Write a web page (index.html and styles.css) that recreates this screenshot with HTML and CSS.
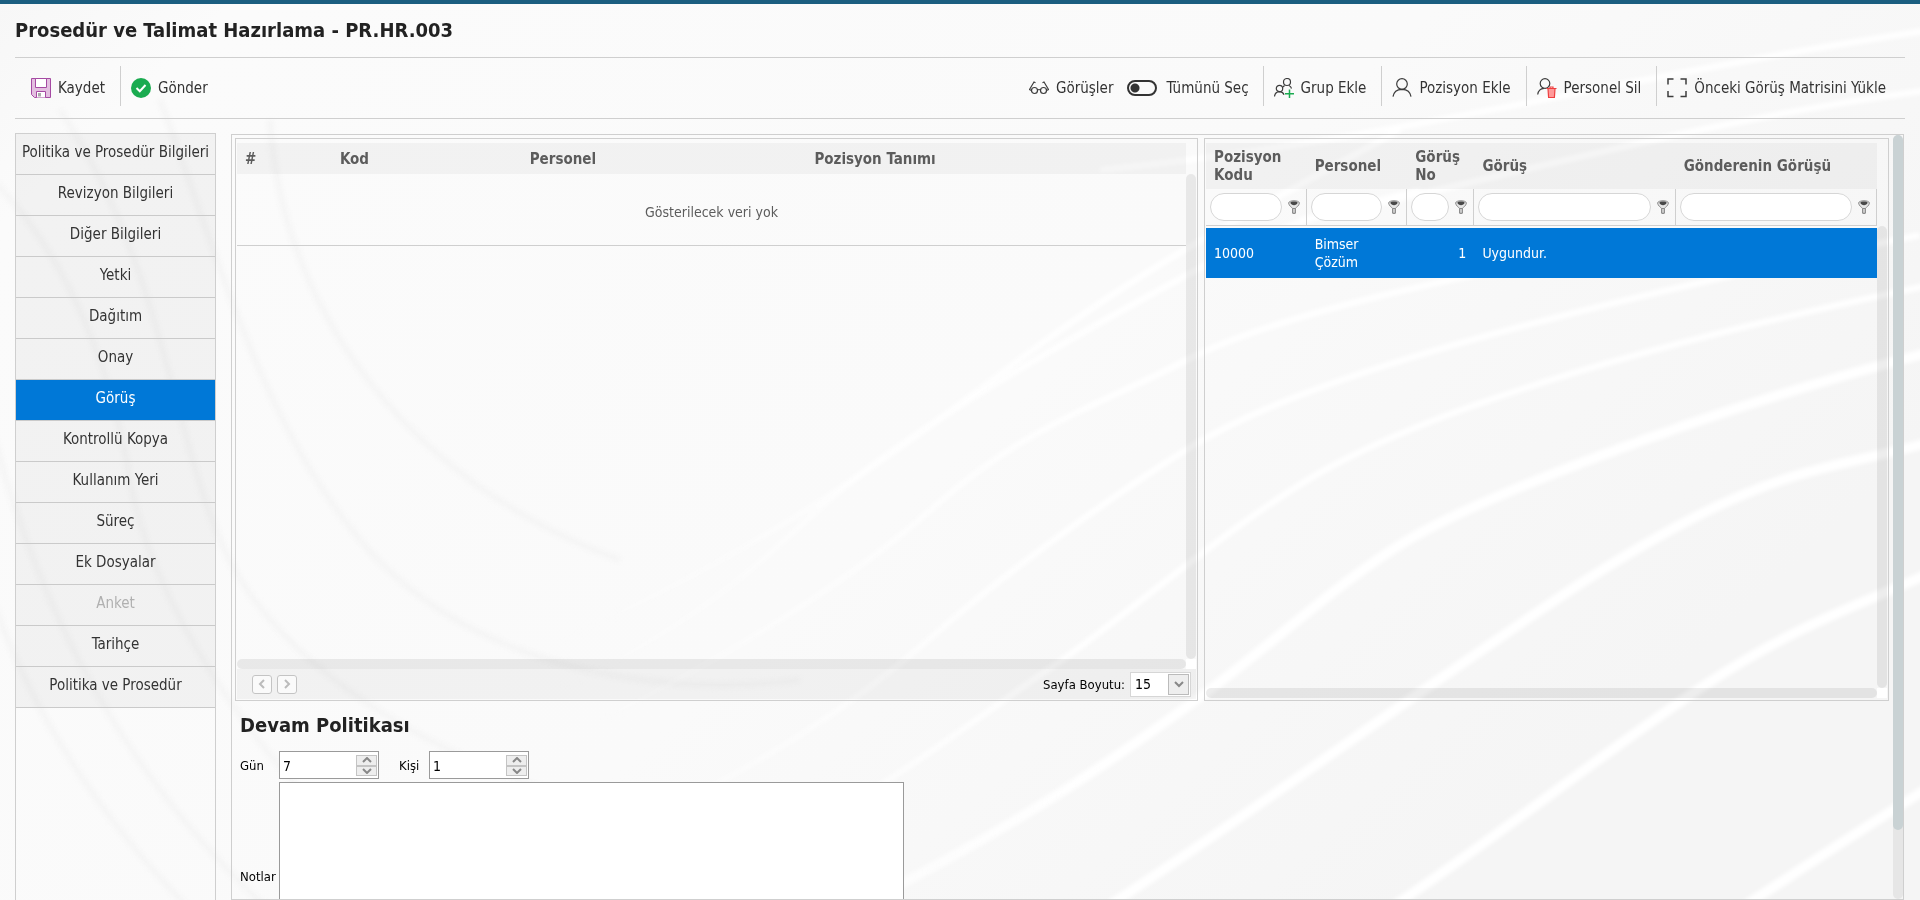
FILE: index.html
```html
<!DOCTYPE html>
<html lang="tr">
<head>
<meta charset="utf-8">
<title>Prosedür ve Talimat Hazırlama - PR.HR.003</title>
<link rel="stylesheet" href="styles.css">
</head>
<body>
<svg class="backdrop" viewBox="0 0 1920 900" preserveAspectRatio="none" aria-hidden="true">
  <defs>
    <linearGradient id="base" x1="0" y1="0" x2="1" y2="0.5">
      <stop offset="0" stop-color="#f7f7f7"/><stop offset="0.1" stop-color="#fbfbfb"/><stop offset="0.6" stop-color="#fafafa"/><stop offset="1" stop-color="#f5f5f5"/>
    </linearGradient>
    <linearGradient id="fade" gradientUnits="userSpaceOnUse" x1="500" y1="0" x2="1100" y2="0">
      <stop offset="0" stop-color="#fff" stop-opacity="0"/><stop offset="1" stop-color="#fff"/>
    </linearGradient>
  </defs>
  <rect width="1920" height="900" fill="url(#base)"/>
  <g class="shade">
    <path d="M-40 150C60 230 110 360 130 480S260 780 420 900"/>
    <path d="M60 110C160 260 170 420 220 540S420 760 640 820"/>
    <path d="M-20 380C20 560 100 760 280 920"/>
    <path d="M160 100C220 260 260 420 360 540S640 700 800 680"/>
    <path d="M-20 560C20 700 100 820 200 920"/>
    <path d="M270 120C280 300 400 480 620 560"/>
  </g>
  <g class="shine">
    <path d="M560 640C740 560 860 480 988 383S1179 250 1400 130"/>
    <path d="M560 690C720 610 760 560 835 495S1064 341 1187 275 1330 215 1420 190"/>
    <path d="M600 720C720 660 840 590 934 507S1100 405 1187 360 1439 279 1700 230"/>
    <path d="M600 840C760 770 860 700 934 635S1120 490 1194 445 1424 337 1920 235"/>
    <path d="M740 870C900 780 980 715 1049 669S1240 515 1332 466 1600 354 1930 285"/>
    <path class="wide" d="M860 905C1020 825 1120 755 1196 700S1340 580 1408 540 1684 416 1930 352"/>
    <path class="wide" d="M1110 905C1240 820 1350 740 1431 685S1600 565 1699 515 1850 465 1930 442"/>
    <path class="wide" d="M1395 905C1500 835 1600 755 1699 689S1860 605 1930 573"/>
    <path class="wide" d="M1746 905C1800 870 1860 830 1930 787"/>
    <path d="M1100 170C1400 140 1600 80 1930 30"/>
    <path d="M1300 220C1500 180 1700 120 1930 90"/>
  </g>
</svg>

<div class="page">
  <header class="heading"><h1>Prosedür ve Talimat Hazırlama - PR.HR.003</h1></header>

  <div class="toolbar">
    <div class="group">
      <button class="tool save"><svg width="20" height="20" viewBox="0 0 20 20"><path d="M.5.5h19v19h-16l-3-3z" fill="#e3bfe0" stroke="#a54aa3"/><path d="M4.500.5h11v9h-11zM5.500 19.500v-6h9v6" fill="#fff" stroke="#a54aa3"/><path d="M7 15h3v3.500H7z" fill="#aaa"/></svg>Kaydet</button>
      <button class="tool send"><svg width="20" height="20" viewBox="0 0 20 20"><circle cx="10" cy="10" r="10" fill="#1aab50"/><path d="M5.500 10l3.300 3.200L14.500 7" fill="none" stroke="#fff" stroke-width="2"/></svg>Gönder</button>
    </div>
    <div class="group">
      <button class="tool views"><svg class="line" width="20" height="20" viewBox="0 0 20 20"><circle cx="5.500" cy="12.500" r="3"/><circle cx="14.500" cy="12.500" r="3"/><path d="M8.500 12q1.500-1 3 0M2.500 12.500l-2-1L5 4l1.500.8M17.500 12.500l2-1L15 4l-1.500.8"/></svg>Görüşler</button>
      <label class="tool all"><input type="checkbox" class="switch">Tümünü Seç</label>
      <button class="tool"><svg class="line" width="20" height="20" viewBox="0 0 20 20"><circle cx="13" cy="4" r="3.500"/><path d="M10.500 7.500 9 9M15 7.500q2 1 2.500 3"/><circle cx="5.500" cy="10.500" r="3.200"/><path d="M.5 18.500q.5-4.500 5-4.800 3.500.3 4.500 3"/><path stroke="#1aab50" stroke-width="1.500" d="M15.500 11.500v8.500M11 15.700h9"/></svg>Grup Ekle</button>
      <button class="tool"><svg class="line" width="20" height="20" viewBox="0 0 20 20"><circle cx="10" cy="6" r="5.300"/><path d="M1 18.700Q2 11.500 10 11.300q8 .2 9 7.400"/></svg>Pozisyon Ekle</button>
      <button class="tool"><svg class="line" width="20" height="20" viewBox="0 0 20 20"><circle cx="8" cy="5.500" r="4.800"/><path d="M.7 16.500q.8-5.800 6.300-6.200"/><path d="M11 10.500h7l-.6 9h-5.800z" fill="#f99" stroke="#ee3f3f"/><path stroke="#ee3f3f" d="M9.500 10.500h10M13 10V9h3v1"/></svg>Personel Sil</button>
      <button class="tool last"><svg class="line" width="20" height="20" viewBox="0 0 20 20"><path stroke-width="1.500" d="M1 6.500V1h5.500M13.500 1H19v5.500M19 13v5.500h-5.500M6.500 18.500H1V13"/></svg>Önceki Görüş Matrisini Yükle</button>
    </div>
  </div>

  <div class="content">
    <nav class="tabs">
      <a href="#">Politika ve Prosedür Bilgileri</a>
      <a href="#">Revizyon Bilgileri</a>
      <a href="#">Diğer Bilgileri</a>
      <a href="#">Yetki</a>
      <a href="#">Dağıtım</a>
      <a href="#">Onay</a>
      <a href="#" class="active" aria-current="page">Görüş</a>
      <a href="#">Kontrollü Kopya</a>
      <a href="#">Kullanım Yeri</a>
      <a href="#">Süreç</a>
      <a href="#">Ek Dosyalar</a>
      <a href="#" class="disabled" aria-disabled="true">Anket</a>
      <a href="#">Tarihçe</a>
      <a href="#">Politika ve Prosedür</a>
    </nav>

    <main class="main">
      <div class="body">
        <div class="panels">
          <section class="panel matrix">
            <div class="view">
              <div class="sheet">
                <table>
                  <colgroup><col class="w10"><col class="w20"><col class="w30"><col class="w40"></colgroup>
                  <thead><tr><th>#</th><th>Kod</th><th>Personel</th><th>Pozisyon Tanımı</th></tr></thead>
                  <tbody><tr><td colspan="4" class="empty">Gösterilecek veri yok</td></tr></tbody>
                </table>
              </div>
              <div class="vbar low"></div>
              <div class="hbar"></div><div class="corner"></div>
            </div>
            <div class="pager">
              <button class="page-btn" aria-label="Önceki"><svg width="8" height="10" viewBox="0 0 8 10"><path d="M6 1 2 5l4 4"/></svg></button>
              <button class="page-btn" aria-label="Sonraki"><svg width="8" height="10" viewBox="0 0 8 10"><path d="m2 1 4 4-4 4"/></svg></button>
              <label for="size">Sayfa Boyutu:</label>
              <div class="combo">
                <select id="size"><option>15</option></select>
                <span class="drop"><svg width="10" height="8" viewBox="0 0 10 8"><path d="m1 2 4 4 4-4"/></svg></span>
              </div>
            </div>
          </section>

          <section class="panel opinions">
            <div class="view">
              <div class="sheet">
                <table>
                  <colgroup><col class="w15"><col class="w15"><col class="w10"><col class="w30"><col class="w30"></colgroup>
                  <thead>
                    <tr><th>Pozisyon Kodu</th><th>Personel</th><th>Görüş No</th><th>Görüş</th><th>Gönderenin Görüşü</th></tr>
                    <tr class="filters">
                      <td><div><input type="text" aria-label="Pozisyon Kodu"><svg width="12" height="14" viewBox="0 0 12 14"><use href="#funnel"/></svg></div></td>
                      <td><div><input type="text" aria-label="Personel"><svg width="12" height="14" viewBox="0 0 12 14"><use href="#funnel"/></svg></div></td>
                      <td><div><input type="text" aria-label="Görüş No"><svg width="12" height="14" viewBox="0 0 12 14"><use href="#funnel"/></svg></div></td>
                      <td><div><input type="text" aria-label="Görüş"><svg width="12" height="14" viewBox="0 0 12 14"><use href="#funnel"/></svg></div></td>
                      <td><div><input type="text" aria-label="Gönderenin Görüşü"><svg width="12" height="14" viewBox="0 0 12 14"><use href="#funnel"/></svg></div></td>
                    </tr>
                  </thead>
                  <tbody><tr class="selected"><td>10000</td><td>Bimser Çözüm</td><td class="num">1</td><td>Uygundur.</td><td></td></tr></tbody>
                </table>
              </div>
              <div class="vbar"></div>
              <div class="hbar"></div><div class="corner"></div>
            </div>
          </section>
        </div>

        <section class="policy">
          <h2>Devam Politikası</h2>
          <div class="row">
            <label class="first" for="day">Gün</label>
            <div class="spin"><input id="day" type="text" value="7"><span class="steps"><button aria-label="Artır"><svg width="10" height="6" viewBox="0 0 10 6"><path d="m1 5 4-4 4 4"/></svg></button><button aria-label="Azalt"><svg width="10" height="6" viewBox="0 0 10 6"><path d="m1 1 4 4 4-4"/></svg></button></span></div>
            <label class="second" for="person">Kişi</label>
            <div class="spin"><input id="person" type="text" value="1"><span class="steps"><button aria-label="Artır"><svg width="10" height="6" viewBox="0 0 10 6"><path d="m1 5 4-4 4 4"/></svg></button><button aria-label="Azalt"><svg width="10" height="6" viewBox="0 0 10 6"><path d="m1 1 4 4 4-4"/></svg></button></span></div>
          </div>
          <div class="row notes">
            <label class="first" for="notes">Notlar</label>
            <textarea id="notes"></textarea>
          </div>
        </section>
      </div>
      <div class="scroll"><div class="thumb"></div></div>
    </main>
  </div>
</div>

<svg class="defs" width="0" height="0" aria-hidden="true">
  <symbol id="funnel" viewBox="0 0 12 14"><path d="M4.700 7.500h2.600v5.800H4.700z" fill="#ddd" stroke="#777"/><path d="M.6 3C.8 0 11.200 0 11.400 3 11 6 8.500 7 7.300 8.500H4.700C3.500 7 1 6 .6 3z" fill="#e6e6e6" stroke="#8a8a8a"/><path d="M2.300 2.800C2.500 1 9.500 1 9.700 2.800 9.300 4.500 7.500 5 6 5.300 4.500 5 2.700 4.500 2.300 2.800z" fill="#484848"/></symbol>
</svg>
</body>
</html>
```
FILE: styles.css
```css
* { box-sizing: border-box; }
body {
  margin: 0;
  background: #fafafa;
  color: #333;
  font-family: Tahoma, "DejaVu Sans Condensed", "Noto Sans", sans-serif;
  font-size: 14px;
}
button, input, select, textarea { font: inherit; color: inherit; margin: 0; }
button { background: none; border: 0; padding: 0; }
svg { display: block; flex: none; }

.backdrop { position: fixed; inset: 0; width: 100%; height: 100%; z-index: -1; }
.shade path { fill: none; stroke: #f5f5f5; stroke-width: 6; }
.shine path { fill: none; stroke: url(#fade); stroke-width: 6; }
.shine .wide { stroke-width: 10; }
.shade, .shine { filter: blur(2px); }
.defs { position: absolute; }

.page {
  display: flex;
  flex-direction: column;
  height: 100vh;
  border-top: 4px solid #1b5e80;
  padding: 0 15px;
  overflow: hidden;
}
.heading { padding: 14px 0; border-bottom: 1px solid #cfcfcf; }
h1, h2 { margin: 0; font-size: 20px; line-height: 25px; color: #222; }

.toolbar {
  display: flex;
  justify-content: space-between;
  align-items: flex-start;
  height: 61px;
  padding: 8px 0 0;
  border-bottom: 1px solid #cfcfcf;
}
.group { display: flex; }
.tool {
  display: flex;
  align-items: center;
  gap: 7px;
  height: 40px;
  padding: 4px 15px 0 10px;
  border-left: 1px solid #cfcfcf;
  font-size: 15px;
  white-space: nowrap;
}
.tool.save { border: 0; padding-left: 16px; }
.tool.views, .tool.all { border: 0; padding-right: 14px; }
.tool.last { padding-right: 19px; }
.tool.all { padding-left: 0; gap: 9px; }
.line { fill: none; stroke: #3c3c3c; stroke-width: 1.2px; }
.switch {
  appearance: none;
  width: 30px;
  height: 16px;
  border: 2px solid #333;
  border-radius: 8px;
  background: radial-gradient(circle at 6px 6px, #333 4px, transparent 5px);
}

.content { display: flex; flex: 1; min-height: 0; padding-top: 14px; gap: 15px; }
.tabs {
  display: flex;
  flex-direction: column;
  width: 201px;
  border: 1px solid #cfcfcf;
  border-bottom: 0;
}
.tabs a {
  height: 41px;
  line-height: 37px;
  font-size: 15px;
  text-align: center;
  text-decoration: none;
  white-space: nowrap;
  color: #333;
  background: rgba(0, 0, 0, 0.035);
  border-bottom: 1px solid #cacaca;
}
.tabs .active { background: #0078d7; color: #fff; }
.tabs .disabled { color: #b0b0b0; }

.main {
  display: flex;
  flex: 1;
  min-width: 0;
  margin: 1px 1px 0 0;
  border: 1px solid #cfcfcf;
}
.body { flex: 1; min-width: 0; padding: 3px; overflow: hidden; }
.scroll { width: 10px; background: #e6e6e6; border-radius: 5px; }
.thumb { height: 91%; background: #c9d2d4; border-radius: 5px; }

.panels { display: flex; gap: 6px; height: 563px; padding-right: 1px; }
.panel {
  display: flex;
  flex-direction: column;
  min-width: 0;
  border: 1px solid #cfcfcf;
  padding: 4px 1px 1px;
}
.matrix { flex: 959; }
.opinions { flex: 681; }
.view {
  display: grid;
  grid-template-columns: 1fr 10px;
  grid-template-rows: 1fr 10px;
  flex: 1;
  min-height: 0;
}
.opinions .view { padding-bottom: 1px; }
.vbar, .hbar { background: rgba(0, 0, 0, 0.07); border-radius: 5px; }
.vbar { margin-top: 83px; }
.vbar.low { margin-top: 31px; }
.corner { background: #fff; }

table { width: 100%; table-layout: fixed; border-collapse: separate; border-spacing: 0; }
.w10 { width: 10%; }
.w15 { width: 15%; }
.w20 { width: 20%; }
.w30 { width: 30%; }
.w40 { width: 40%; }
th {
  height: 31px;
  padding: 0 8px;
  text-align: left;
  font-size: 15px;
  line-height: 18px;
  color: #5c5c5c;
  background: rgba(0, 0, 0, 0.035);
}
.opinions th { height: 46px; }
.empty {
  height: 72px;
  padding: 4px 0 0;
  text-align: center;
  color: #5c5c5c;
  border-bottom: 1px solid #cfcfcf;
}
.filters td { height: 37px; padding: 0 6px 0 4px; border-right: 1px solid #cfcfcf; border-bottom: 1px solid #cfcfcf; }
.filters div { display: flex; align-items: center; gap: 6px; }
.filters input {
  flex: 1;
  min-width: 0;
  height: 28px;
  padding: 0 8px;
  border: 1px solid #d6d6d6;
  border-radius: 14px;
  background: #fff;
}
.selected td {
  height: 52px;
  padding: 0 8px;
  line-height: 18px;
  color: #fff;
  background: #0078d7;
  border-top: 2px solid #fafafa;
}
.selected .num { text-align: right; }

.pager {
  display: flex;
  align-items: center;
  height: 30px;
  padding: 0 5px 0 15px;
  gap: 5px;
  color: #000;
  background: rgba(0, 0, 0, 0.035);
}
.pager svg, .steps svg { fill: none; stroke: #888; stroke-width: 2px; }
.page-btn {
  display: grid;
  place-items: center;
  width: 20px;
  height: 19px;
  border: 1px solid #c4c4c4;
  border-radius: 3px;
  background: #fafafa;
}
.pager .page-btn svg { stroke: #bbb; }
.pager label { margin-left: auto; font-size: 13px; }
.combo {
  display: flex;
  width: 61px;
  height: 25px;
  padding: 1px;
  border: 1px solid #d6d6d6;
  background: #fff;
}
.combo select { appearance: none; flex: 1; min-width: 0; padding: 0 3px; border: 0; background: none; font-size: 14px; }
.drop { display: grid; place-items: center; width: 21px; border: 1px solid #bbb; background: #eee; }

.policy { padding: 12px 5px 0; color: #000; font-size: 13px; }
.row { display: flex; align-items: center; padding-top: 13px; }
.first { width: 39px; }
.second { width: 30px; margin-left: 20px; }
.spin {
  display: flex;
  width: 100px;
  height: 28px;
  padding: 3px 1px 2px 3px;
  border: 1px solid #9a9a9a;
  background: #fff;
}
.spin input { flex: 1; min-width: 0; padding: 0; border: 0; outline: 0; background: none; font-size: 14px; }
.steps { display: flex; flex-direction: column; width: 21px; }
.steps button { display: grid; place-items: center; flex: 1; border: 1px solid #c4c4c4; background: #eee; }
.notes { padding-top: 3px; }
textarea {
  width: 625px;
  height: 188px;
  border: 1px solid #9a9a9a;
  background: #fff;
  resize: none;
}
```
